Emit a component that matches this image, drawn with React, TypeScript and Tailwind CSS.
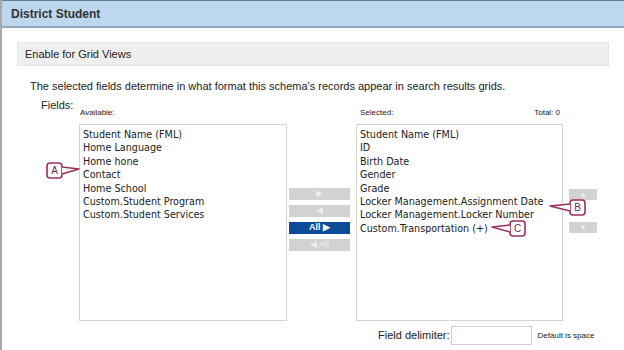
import React from 'react';

const available = [
  'Student Name (FML)',
  'Home Language',
  'Home hone',
  'Contact',
  'Home School',
  'Custom.Student Program',
  'Custom.Student Services',
];

const selected = [
  'Student Name (FML)',
  'ID',
  'Birth Date',
  'Gender',
  'Grade',
  'Locker Management.Assignment Date',
  'Locker Management.Locker Number',
  'Custom.Transportation (+)',
];

const Callout: React.FC<{ letter: string; box: [number, number]; tip: [number, number]; side: 'left' | 'right' }> = ({
  letter,
  box,
  tip,
  side,
}) => {
  const [bx, by] = box;
  const w = 15;
  const h = 15;
  const edge = side === 'right' ? bx + w : bx;
  const mid = by + h / 2;
  return (
    <g>
      <rect x={bx} y={by} width={w} height={h} rx={3} fill="white" stroke="#9e2f5d" strokeWidth={1.6} />
      <polyline
        points={`${edge},${mid - 3.5} ${tip[0]},${tip[1]} ${edge},${mid + 3.5}`}
        fill="white"
        stroke="#9e2f5d"
        strokeWidth={1.4}
        strokeLinejoin="round"
      />
      <text
        x={bx + w / 2}
        y={by + h / 2 + 3.5}
        textAnchor="middle"
        fontSize={10}
        fontFamily="Liberation Sans, Arial, sans-serif"
        fill="#6b2a48"
      >
        {letter}
      </text>
    </g>
  );
};

const ListBox: React.FC<{ items: string[] }> = ({ items }) => (
  <div className="h-[197px] border border-[#d4d4d4] bg-white px-[3px] pt-[3px] font-['DejaVu_Sans_Condensed','DejaVu_Sans',Verdana,sans-serif] text-[10.7px] leading-[13.4px] text-[#222]">
    {items.map((item) => (
      <div key={item} className="whitespace-nowrap">
        {item}
      </div>
    ))}
  </div>
);

const MoveButton: React.FC<{ label: string; active?: boolean }> = ({ label, active }) => (
  <div
    className={
      active
        ? 'flex h-[12px] w-[61px] items-center justify-center bg-[#0b4c96] text-[9px] font-bold text-white'
        : 'flex h-[12px] w-[61px] items-center justify-center bg-[#d2d2d2] text-[9px] text-[#eeeeee]'
    }
  >
    {label}
  </div>
);

export default function App() {
  return (
    <div className="relative h-[350px] w-[624px] overflow-hidden border-l-2 border-[#a9a9a9] bg-white font-['Liberation_Sans',Arial,sans-serif] text-[#333]">
      <div className="flex h-[28px] items-center border-t border-b-2 border-t-[#5f7f9f] border-b-[#8fa8c0] bg-[#bdd7ee] px-[9px] text-[12px] font-bold text-[#333]">
        District Student
      </div>

      <div className="mx-[15px] mt-[14px] flex h-[24px] items-center border border-[#e6e6e6] bg-[#efefef] px-[7px] text-[11px] text-[#222]">
        Enable for Grid Views
      </div>

      <div className="mt-[13px] pl-[28px] text-[11px] leading-[14px] text-[#222]">
        The selected fields determine in what format this schema's records appear in search results grids.
      </div>

      <div className="mt-[5px] flex items-start pl-[39px]">
        <div className="w-[38px] text-[11px] leading-[14px] text-[#222]">Fields:</div>

        <div className="w-[208px]">
          <div className="mb-[6px] mt-[10px] pl-[1px] text-[8px] leading-[10px] text-[#222]">Available:</div>
          <ListBox items={available} />
        </div>

        <div className="ml-[2px] mt-[90px] flex flex-col gap-[5px]">
          <MoveButton label="▶" />
          <MoveButton label="◀" />
          <MoveButton label="All ▶" active />
          <MoveButton label="◀ All" />
        </div>

        <div className="ml-[6px] w-[207px]">
          <div className="mb-[6px] mt-[10px] flex justify-between pl-[4px] pr-[3px] text-[8px] leading-[10px] text-[#222]">
            <span>Selected:</span>
            <span>Total: 0</span>
          </div>
          <ListBox items={selected} />
        </div>

        <div className="ml-[6px] mt-[91px] flex flex-col gap-[22px]">
          <div className="flex h-[11px] w-[28px] items-center justify-center bg-[#d2d2d2] text-[8px] text-[#eeeeee]">▲</div>
          <div className="flex h-[11px] w-[28px] items-center justify-center bg-[#d2d2d2] text-[8px] text-[#eeeeee]">▼</div>
        </div>
      </div>

      <div className="mt-[5px] flex items-center pl-[376px]">
        <span className="text-[11px] text-[#222]">Field delimiter:</span>
        <div className="ml-[1px] h-[19px] w-[81px] border border-[#cfcfcf] bg-white" />
        <span className="ml-[6px] text-[8px] text-[#222]">Default is space</span>
      </div>

      <div className="mx-[19px] mt-[5px] border-t border-[#dcdcdc]" />

      <svg className="pointer-events-none absolute left-0 top-0" width={624} height={350}>
        <Callout letter="A" box={[45, 163]} tip={[77, 169]} side="right" />
        <Callout letter="B" box={[568, 200]} tip={[548, 206]} side="left" />
        <Callout letter="C" box={[508, 221]} tip={[490, 227]} side="left" />
      </svg>
    </div>
  );
}
